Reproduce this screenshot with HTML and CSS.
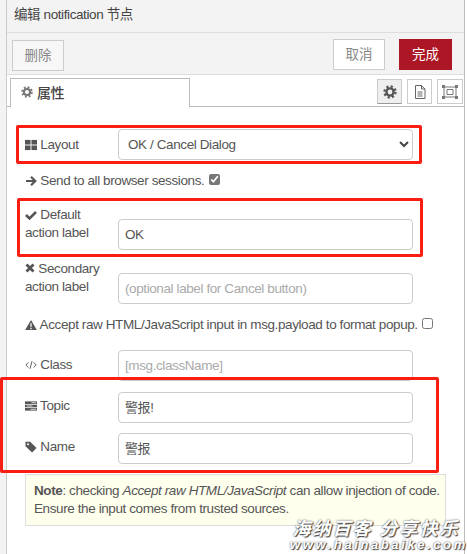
FILE: index.html
```html
<!DOCTYPE html>
<html lang="zh-CN">
  <head>
    <meta charset="UTF-8" />
    <title>编辑 notification 节点</title>
    <link rel="stylesheet" href="styles.css">
  </head>
  <body>
    <div class="tray">
      <div class="tray-title">编辑 notification 节点</div>

      <div class="tray-toolbar">
        <button class="btn btn-delete">删除</button>
        <div class="toolbar-right">
          <button class="btn btn-cancel">取消</button>
          <button class="btn btn-done">完成</button>
        </div>
      </div>

      <div class="tabs">
        <div class="tab">
          <svg class="icon tab-cog" viewBox="0 0 14 14"><circle cx="7" cy="7" r="3.6" fill="none" stroke="#777" stroke-width="2.4"/><circle cx="7" cy="7" r="5.6" fill="none" stroke="#777" stroke-width="2.2" stroke-dasharray="2.2 2.2"/></svg>
          属性
        </div>
        <div class="tab-tools">
          <span class="tool tool-active">
            <svg class="icon" viewBox="0 0 14 14"><circle cx="7" cy="7" r="3.6" fill="none" stroke="#555" stroke-width="2.4"/><circle cx="7" cy="7" r="5.6" fill="none" stroke="#555" stroke-width="2.2" stroke-dasharray="2.2 2.2"/></svg>
          </span>
          <span class="tool">
            <svg class="icon" viewBox="0 0 14 14" fill="none" stroke="#666"><path d="M2.5 .5h6l3.500 3.500v9.500h-9.500z"/><path d="M8.500 .5v3.500h3.500M4.500 7h5M4.500 9h5M4.500 11h5"/></svg>
          </span>
          <span class="tool tool-wide">
            <svg class="icon icon-frame" viewBox="0 0 16 14" fill="none" stroke="#777"><path d="M2 2h12v10h-12z"/><path d="M5 4.500h6v5h-6z"/><g fill="#777"><rect x="0.500" y="0.500" width="2" height="2"/><rect x="13.500" y="0.500" width="2" height="2"/><rect x="0.500" y="11.500" width="2" height="2"/><rect x="13.500" y="11.500" width="2" height="2"/></g></svg>
          </span>
        </div>
      </div>

      <div class="form">
        <div class="row row-layout">
          <label class="label">
            <svg class="icon" viewBox="0 0 13 13" fill="#555"><rect x="0" y="1" width="6" height="5"/><rect x="7" y="1" width="6" height="5"/><rect x="0" y="7" width="6" height="5"/><rect x="7" y="7" width="6" height="5"/></svg>
            Layout
          </label>
          <div class="select-wrap">
            <select class="field select"><option>OK / Cancel Dialog</option></select>
            <svg class="chevron" viewBox="0 0 10 7" fill="none" stroke="#444" stroke-width="2"><path d="M1 1l4 4 4-4"/></svg>
          </div>
        </div>

        <div class="line line-send">
          <svg class="icon" viewBox="0 0 12 12" fill="none" stroke="#555" stroke-width="2.200"><path d="M1 6h9M6 1.800l4.300 4.200-4.300 4.200"/></svg>
          Send to all browser sessions.
          <input class="check" type="checkbox" checked>
        </div>

        <div class="row row-default">
          <label class="label">
            <svg class="icon" viewBox="0 0 12 12" fill="none" stroke="#555" stroke-width="2.600"><path d="M1 6l3.500 3.500 6.500-6.500"/></svg>
            Default<br>action label
          </label>
          <input class="field" type="text" value="OK">
        </div>

        <div class="row row-secondary">
          <label class="label">
            <svg class="icon icon-small" viewBox="0 0 10 10" fill="none" stroke="#555" stroke-width="2.800"><path d="M1.500 1.500l7 7M8.500 1.500l-7 7"/></svg>
            Secondary<br>action label
          </label>
          <input class="field" type="text" placeholder="(optional label for Cancel button)">
        </div>

        <div class="line line-raw">
          <svg class="icon" viewBox="0 0 13 12"><path d="M6.500 .5l6.300 11h-12.600z" fill="#555"/><path d="M6.500 4v4M6.500 9v1.500" stroke="#fff" stroke-width="1.400"/></svg>
          Accept raw HTML/JavaScript input in msg.payload to format popup.
          <input class="check" type="checkbox">
        </div>

        <div class="row row-class">
          <label class="label">
            <svg class="icon" viewBox="0 0 14 12" fill="none" stroke="#555" stroke-width="1.100"><path d="M4 3l-3 3 3 3M10 3l3 3-3 3M8.200 1.500l-2.400 9"/></svg>
            Class
          </label>
          <input class="field" type="text" placeholder="[msg.className]">
        </div>

        <div class="row row-topic">
          <label class="label">
            <svg class="icon" viewBox="0 0 13 12"><rect x="0" y="1" width="13" height="2.800" fill="#555"/><rect x="0" y="4.600" width="13" height="2.800" fill="#555"/><rect x="0" y="8.200" width="13" height="2.800" fill="#555"/><rect x="7" y="1.800" width="5" height="1.200" fill="#ccc"/><rect x="2" y="5.400" width="6" height="1.200" fill="#ccc"/><rect x="6" y="9" width="6" height="1.200" fill="#ccc"/></svg>
            Topic
          </label>
          <input class="field field-cjk" type="text" value="警报!">
        </div>

        <div class="row row-name">
          <label class="label">
            <svg class="icon" viewBox="0 0 12 12"><path d="M.5 .8h4.700l6.300 6.300-4.400 4.400-6.600-6.300z" fill="#555"/><circle cx="3" cy="3.300" r="1" fill="#fff"/></svg>
            Name
          </label>
          <input class="field field-cjk" type="text" value="警报">
        </div>

        <div class="note">
          <b>Note</b>: checking <i>Accept raw HTML/JavaScript</i> can allow injection of code.
          Ensure the input comes from trusted sources.
        </div>
      </div>
    </div>

    <!-- red boxes drawn over the form -->
    <div class="mark mark-layout"></div>
    <div class="mark mark-default"></div>
    <div class="mark mark-topic"></div>

    <div class="watermark">
      <div class="wm-cn">海纳百客 分享快乐</div>
      <div class="wm-en">www.hainabaike.com</div>
    </div>
  </body>
</html>
```

FILE: styles.css
```css
body {
  margin: 0;
  width: 467px;
  height: 554px;
  overflow: hidden;
  position: relative;
  background: #fff;
  font-family: "Liberation Sans", "Noto Sans CJK SC", sans-serif;
  font-size: 13.500px;
  letter-spacing: -0.400px;
  color: #555;
}

.tray {
  margin-left: 6px;
  width: 459px;
  height: 554px;
  box-sizing: border-box;
  border-left: 1px solid #ccc;
  border-right: 1px solid #bbb;
  background: #fff;
  box-shadow: -6px 0 0 #f3f3f3;
}

.tray-title {
  height: 32px;
  line-height: 30px;
  padding-left: 7px;
  background: #f3f3f3;
  border-bottom: 1px solid #ddd;
  color: #444;
}

.tray-toolbar {
  height: 42px;
  box-sizing: border-box;
  padding: 6px 12px 0 5px;
  display: flex;
  justify-content: space-between;
  background: #f3f3f3;
  border-bottom: 1px solid #ddd;
}

.toolbar-right {
  display: flex;
  gap: 14px;
}

.btn {
  height: 31px;
  padding: 0 0 4px;
  border: 1px solid #ccc;
  background: #fff;
  color: #888;
  font-family: inherit;
  font-size: 13.500px;
  box-sizing: border-box;
}

.btn-delete {
  width: 52px;
  margin-top: 1px;
  background: #f7f7f7;
}

.btn-cancel {
  width: 52px;
}

.btn-done {
  width: 53px;
  background: #ad1625;
  border-color: #ad1625;
  color: #fff;
}

.tabs {
  height: 32px;
  box-sizing: border-box;
  padding: 3px 1px 0 3px;
  display: flex;
  justify-content: space-between;
  border-bottom: 1px solid #bbb;
}

.tab {
  width: 180px;
  height: 29px;
  box-sizing: border-box;
  padding: 0 0 2px 10px;
  background: #fff;
  border: 1px solid #bbb;
  border-bottom: none;
  font-size: 14px;
  font-weight: 500;
  color: #444;
  display: flex;
  align-items: center;
  gap: 4px;
}

.tab-tools {
  display: flex;
  gap: 5px;
  margin-top: 1px;
}

.tool {
  width: 25px;
  height: 25px;
  box-sizing: border-box;
  border: 1px solid #ccc;
  display: flex;
  align-items: center;
  justify-content: center;
}

.tool-wide {
  width: 26px;
}

.tool-active {
  background: #efefef;
  border-bottom-color: #999;
}

.icon {
  width: 12px;
  height: 12px;
  vertical-align: -2px;
}

.tool .icon {
  width: 14px;
  height: 14px;
}

.tool .icon-frame {
  width: 16px;
  height: 14px;
}

.icon-small {
  width: 10px;
  height: 10px;
  vertical-align: 0;
}

.form {
  padding-left: 18px;
  width: 395px;
}

.row {
  display: flex;
  align-items: center;
}

.label {
  width: 93px;
  flex: none;
  line-height: 18px;
}

.field {
  width: 295px;
  height: 31px;
  box-sizing: border-box;
  padding: 0 6px;
  border: 1px solid #ccc;
  border-radius: 4px;
  background: #fff;
  color: #555;
  font-family: inherit;
  font-size: 13.500px;
  letter-spacing: -0.400px;
  outline: none;
}

.field-cjk {
  font-size: 13px;
  padding-bottom: 3px;
}

.field::placeholder {
  color: #aaa;
  opacity: 1;
}

.select-wrap {
  position: relative;
  height: 31px;
}

.select {
  appearance: none;
  padding-left: 9px;
  display: block;
}

.chevron {
  position: absolute;
  right: 4px;
  top: 12px;
  width: 10px;
  height: 7px;
}

.line {
  white-space: nowrap;
}

.check {
  width: 11px;
  height: 11px;
  margin: 0 0 0 1px;
  vertical-align: 0;
  accent-color: #777;
}

.row-layout {
  margin-top: 22px;
}

.line-send {
  margin-top: 13px;
  height: 16px;
  line-height: 16px;
}

.row-default {
  margin-top: 21px;
  height: 40px;
  align-items: flex-end;
}

.row-default .label,
.row-secondary .label {
  align-self: flex-start;
  margin-top: -4px;
}

.row-secondary {
  margin-top: 14px;
  height: 40px;
  align-items: flex-end;
}

.line-raw {
  margin-top: 13px;
  height: 16px;
  line-height: 16px;
}

.row-class {
  margin-top: 17px;
}

.row-class .label {
  margin-top: -2px;
}

.row-topic {
  margin-top: 11px;
}

.row-name {
  margin-top: 10px;
}

.row-topic .label,
.row-name .label {
  margin-top: -3px;
}

.note {
  width: 421px;
  margin: 10px 0 0 0;
  box-sizing: border-box;
  height: 52px;
  padding: 7px 3px 7px 8px;
  line-height: 18px;
  background: #ffe;
  border: 1px solid #ddd;
}

.mark {
  position: absolute;
  box-sizing: border-box;
  border: 3px solid #fa1d14;
  border-radius: 2px;
}

.mark-layout {
  left: 16px;
  top: 125px;
  width: 406px;
  height: 39px;
}

.mark-default {
  left: 17px;
  top: 198px;
  width: 406px;
  height: 59px;
}

.mark-topic {
  left: 0;
  top: 377px;
  width: 439px;
  height: 96px;
}

.watermark {
  position: absolute;
  left: 290px;
  top: 520px;
  width: 172px;
  color: #fff;
  font-style: italic;
  font-weight: bold;
  text-shadow: 0 0 2px #444, 1px 1px 1px #444;
  text-align: center;
  white-space: nowrap;
}

.wm-cn {
  font-size: 18px;
  line-height: 18px;
  letter-spacing: 2px;
}

.wm-en {
  font-size: 13px;
  line-height: 13px;
  letter-spacing: 2.600px;
}
```
